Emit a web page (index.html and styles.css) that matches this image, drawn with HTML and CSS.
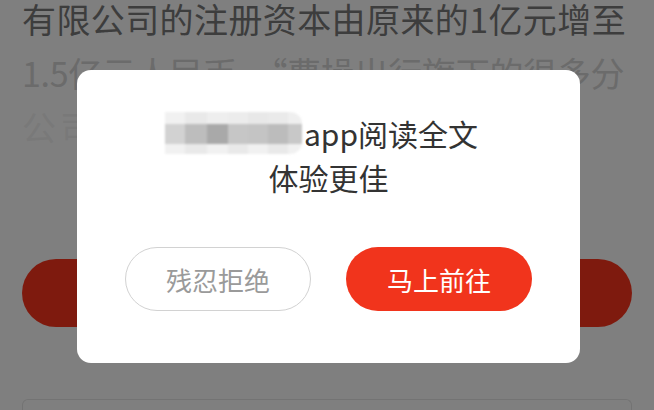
FILE: index.html
```html
<!DOCTYPE html>
<html>
<head>
<link rel="stylesheet" href="styles.css">
</head>
<body>
<div class="page">
    <div class="article">
        <p class="line line-1">有限公司的注册资本由原来的1亿元增至</p>
        <p class="line line-2">1.5亿元人民币，“曹操出行旗下的很多分</p>
        <p class="line line-3">公司都已经陆续完成了增资工作</p>
    </div>
    <div class="open-app"></div>
    <div class="comment-box"></div>
</div>

<div class="mask"></div>

<div class="dialog">
    <div class="dialog-title">
        <div class="title-line">
            <span class="mosaic">
                <i class="m1"></i><i class="m2"></i><i class="m3"></i><i class="m4"></i><i class="m5"></i><i class="m6"></i><i class="m7"></i>
                <i class="m8"></i><i class="m9"></i><i class="m10"></i><i class="m11"></i><i class="m12"></i><i class="m13"></i><i class="m14"></i>
                <i class="m1"></i><i class="m2"></i><i class="m1"></i><i class="m2"></i><i class="m1"></i><i class="m2"></i><i class="m1"></i>
            </span>app阅读全文
        </div>
        <div class="title-line">体验更佳</div>
    </div>
    <div class="dialog-buttons">
        <button class="btn btn-cancel">残忍拒绝</button>
        <button class="btn btn-go">马上前往</button>
    </div>
</div>
</body>
</html>
```

FILE: styles.css
```css
* {
    margin: 0;
    padding: 0;
    box-sizing: border-box;
    font-family: "Noto Sans CJK SC", "Noto Sans", sans-serif;
}

body {
    width: 654px;
    height: 410px;
    overflow: hidden;
    background: #fff;
}

.page {
    padding: 0 22px;
}

.article {
    margin-right: -12px;
}

.line {
    font-size: 34px;
    line-height: 54px;
    white-space: nowrap;
    letter-spacing: 0.4px;
}

.line-1 {
    color: #7a7a7a;
    line-height: 38px;
    margin-bottom: 8px;
}

.line-2 {
    color: #d6d6d6;
    letter-spacing: -0.3px;
}

.line-3 {
    color: #f2f2f2;
    letter-spacing: 4px;
}

.open-app {
    margin-top: 105px;
    height: 68px;
    border-radius: 34px;
    background: #fd351d;
}

.comment-box {
    margin-top: 72px;
    height: 11px;
    border: 1px solid #e6e6e6;
    border-bottom: none;
    border-radius: 6px 6px 0 0;
}

.mask {
    position: fixed;
    top: 0;
    left: 0;
    right: 0;
    bottom: 0;
    background: rgba(0, 0, 0, 0.5);
}

.dialog {
    position: fixed;
    left: 77px;
    top: 70px;
    width: 503px;
    height: 293px;
    background: #fff;
    border-radius: 14px;
    padding-top: 41px;
}

.dialog-title {
    color: #333;
    font-size: 30px;
    line-height: 44px;
    text-align: center;
}

.title-line {
    display: flex;
    justify-content: center;
    align-items: center;
}

.title-line:first-child {
    padding-right: 14px;
}

.mosaic {
    display: grid;
    grid-template-columns: 20px 22px 21px 20px 20px 20px 14px;
    grid-template-rows: 12px 20px 10px;
    width: 137px;
    height: 42px;
    margin-right: 2px;
    border-radius: 0 12px 12px 0;
    overflow: hidden;
    filter: blur(1px);
}

.mosaic i {
    display: block;
}

.m1 { background: #f1f1f1; }
.m2 { background: #e9e9e9; }
.m3 { background: #eeeeee; }
.m4 { background: #ececec; }
.m5 { background: #e8e8e8; }
.m6 { background: #eaeaea; }
.m7 { background: #efefef; }
.m8 { background: #d2d2d2; }
.m9 { background: #bdbdbd; }
.m10 { background: #a9a9a9; }
.m11 { background: #c6c6c6; }
.m12 { background: #c4c4c4; }
.m13 { background: #bcbcbc; }
.m14 { background: #c8c8c8; }

.dialog-buttons {
    display: flex;
    justify-content: center;
    gap: 35px;
    margin-top: 48px;
}

.btn {
    width: 186px;
    height: 64px;
    border-radius: 32px;
    font-size: 26px;
    background: #fff;
    cursor: pointer;
}

.btn-cancel {
    border: 1.5px solid #d2d2d2;
    color: #9a9a9a;
}

.btn-go {
    border: none;
    background: #f1341c;
    color: #fff;
}
```
